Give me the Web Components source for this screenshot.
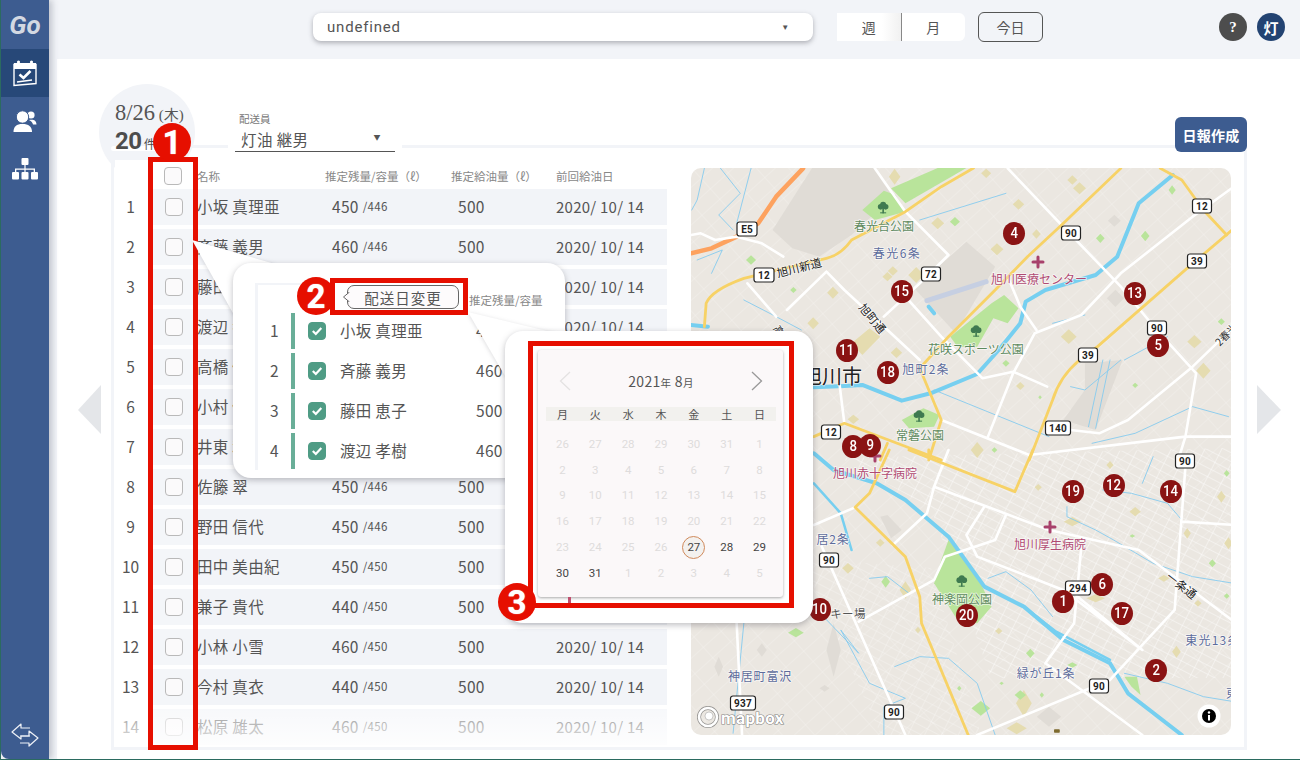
<!DOCTYPE html>
<html lang="ja"><head><meta charset="utf-8"><title>Go</title>
<style>
html,body{margin:0;padding:0;background:#2b6b60;width:1300px;height:760px;overflow:hidden}
body{font-family:"Noto Sans CJK JP","Noto Sans",sans-serif;color:#555}
</style></head><body>
<app-shell></app-shell>
<script>
const FONT='"Noto Sans CJK JP","Noto Sans",sans-serif';
function def(name,fn){customElements.define(name,class extends HTMLElement{connectedCallback(){if(this.shadowRoot)return;const r=this.attachShadow({mode:'open'});r.innerHTML=fn(this);}});}

def('side-bar',()=>`<style>
:host{display:flex;flex-direction:column;width:48px;height:100%;background:#3d5c90;border-bottom-left-radius:8px;box-shadow:3px 0 6px rgba(60,70,90,.28);position:relative;z-index:2;flex:none}
.logo{height:49px;display:flex;align-items:center;justify-content:center;font:italic 700 26px "Roboto",sans-serif;color:#d3d8e2}
.it{height:48px;display:flex;align-items:center;justify-content:center}
.on{background:#274878}
.sp{flex:1}
.bot{height:37px;display:flex;justify-content:center;align-items:flex-start}
svg{display:block}
</style>
<div class="logo">Go</div>
<div class="it on"><svg width="26" height="28" viewBox="0 0 26 28" fill="none" stroke="#fff"><path d="M2 5.500h22v19l-22 2z" stroke-width="1.400"/><rect x="2" y="4" width="22" height="6" fill="#fff" stroke="none"/><circle cx="6.500" cy="3" r="1.600" fill="#fff" stroke="none"/><circle cx="19.500" cy="3" r="1.600" fill="#fff" stroke="none"/><path d="M7.500 15.500l4 3.500 7-7" stroke-width="2.600"/><path d="M5 23l15-2" stroke-width="1.400"/></svg></div>
<div class="it"><svg width="24" height="24" viewBox="0 0 24 24" fill="#fff"><circle cx="18" cy="6" r="3.600"/><path d="M16 11c4-1 7.500 0 7.500 4.500H20c-.5-2-1.500-3-4-4.500z"/><circle cx="9.500" cy="8" r="6.200" stroke="#3d5c90" stroke-width="1"/><path d="M.5 23c0-5.500 3-8 9-8s9.500 2.500 9.500 8z"/></svg></div>
<div class="it"><svg width="26" height="22" viewBox="0 0 26 22" fill="#fff"><rect x="9.500" y="0" width="7" height="7" rx="1"/><rect x="0" y="14" width="7" height="7.500" rx="1"/><rect x="9.500" y="14" width="7" height="7.500" rx="1"/><rect x="19" y="14" width="7" height="7.500" rx="1"/><path d="M12.400 7h1.200v3.500H23V14h-1.300v-2.300h-8.100V14h-1.200v-2.300H4.300V14H3v-3.500h9.400z"/></svg></div>
<div class="sp"></div>
<div class="bot"><svg width="30" height="26" viewBox="0 0 30 26" fill="none" stroke="#eef1f7" stroke-width="1.200" stroke-linejoin="round"><path d="M20 6H11V2L2 10l9 7v-3h9"/><path d="M10 14h9V9l9 7-9 8v-3h-9"/></svg></div>`);

def('top-bar',()=>`<style>
:host{display:flex;height:59px;flex:none;background:#f2f4f8;box-sizing:border-box;padding:13px 15px 0 264px;align-items:flex-start;font-family:${FONT};color:#555}
.sel{width:500px;height:28px;background:#fff;border-radius:8px;box-shadow:0 2px 5px rgba(70,70,80,.4);display:flex;align-items:center;padding:0 23px 0 14px;box-sizing:border-box;justify-content:space-between;font:15px Roboto,sans-serif;letter-spacing:.8px}
.car{font-size:8px}
.tog{display:flex;margin-left:24px;width:128px;height:28px;background:#fff;border-radius:6px;font-size:14px}
.tog span{flex:1;display:flex;align-items:center;justify-content:center}
.tog span:first-child{border-right:1px solid #888;background:linear-gradient(90deg,#fff 70%,#f1f1f1)}
.today{margin:-1px 0 0 13px;width:65px;height:30px;box-sizing:border-box;border:1px solid #555;border-radius:6px;display:flex;align-items:center;justify-content:center;font-size:14px}
.sp{flex:1}
.c{width:28px;height:28px;border-radius:50%;color:#fff;display:flex;align-items:center;justify-content:center;font:700 15px "Liberation Serif",serif}
</style>
<div class="sel"><span>undefined</span><span class="car">▼</span></div>
<div class="tog"><span>週</span><span>月</span></div>
<div class="today">今日</div>
<div class="sp"></div>
<div class="c" style="background:#4d4d4d">?</div>
<div class="c" style="background:#234372;margin-left:10px;font-family:'Noto Sans CJK JP',serif">灯</div>`);

def('day-tab',()=>`<style>
:host{display:block;width:96px;height:96px;margin-left:-12px;border-radius:50%;background:#f2f4f8;flex:none;position:relative;z-index:1;font-family:${FONT};color:#555}
.d{position:absolute;left:16px;top:16px;font:22.500px "Liberation Serif",serif;white-space:nowrap}
.d small{font-size:15px}
.n{position:absolute;left:16px;top:43px;font:700 24px/28px "Roboto",sans-serif;white-space:nowrap;color:#4d4d4d;letter-spacing:-.5px}
.n small{font:400 12px ${FONT}}
.strip{position:absolute;left:12px;top:62px;width:50px;height:5px;background:#fff;border-radius:3px}
</style><div class="strip"></div><div class="d">8/26<small> (木)</small></div><div class="n">20<small> 件</small></div>`);

def('driver-select',()=>`<style>
:host{display:block;width:160px;margin-left:40px;height:68px;box-sizing:border-box;padding-top:28px;position:relative;z-index:1;background:#fff;box-shadow:7px 0 0 #fff,-7px 0 0 #fff;font-family:${FONT};color:#555}
.l{font-size:10.500px;line-height:14px;padding-left:4px;color:#777}
.v{height:25px;border-bottom:1px solid #555;display:flex;justify-content:space-between;align-items:center;padding:0 14px 0 6px;font-size:15.500px;letter-spacing:.4px}
.v i{font-style:normal;font-size:7px;margin-top:-4px}
</style><div class="l">配送員</div><div class="v"><span>灯油 継男</span><i>▼</i></div>`);

def('report-button',()=>`<style>
:host{display:flex;align-items:center;justify-content:center;width:72px;height:35px;border-radius:6px;background:#3d5c90;color:#fff;font:700 14px ${FONT};margin:33px 0 0 auto;flex:none;position:relative;z-index:1;letter-spacing:.2px}
</style>日報作成`);

def('check-box',h=>`<style>
:host{display:flex;width:18px;height:18px;box-sizing:border-box;border-radius:4px;background:${h.hasAttribute('checked')?'#4f9c85':'#fbf9fb'};border:1px solid ${h.hasAttribute('checked')?'#4f9c85':'#a8a8a8'};align-items:center;justify-content:center;flex:none}
</style>${h.hasAttribute('checked')?'<svg width="12" height="10" viewBox="0 0 12 10" fill="none" stroke="#fff" stroke-width="2.200"><path d="M1.800 5l3 3 5.500-6"/></svg>':''}`);

def('list-row',h=>{const a=n=>h.getAttribute(n);const cov=(a('cover')||'');return `<style>
:host{display:grid;grid-template-columns:33px 49px 135px 126px 98px 1fr;height:36px;margin-bottom:4px;align-items:center;font-family:${FONT};color:#555;font-size:15.500px;letter-spacing:.3px}
.n{text-align:center;font-size:15.500px;padding-right:2px;padding-bottom:2px;letter-spacing:0}
.b{height:36px;background:#f2f4f8;display:flex;align-items:center;white-space:nowrap;box-sizing:border-box;padding-bottom:2px}
.ck{justify-content:center;padding:0 0 0 1px;border-left:1px solid #d8d9e2}
.num{font-size:15.500px;letter-spacing:.3px}
.num small{font-size:11.500px;margin-left:4px}
.date{font-size:15px;letter-spacing:.25px}
</style><div class="n">${a('no')}</div><div class="b ck"><check-box></check-box></div><div class="b">${a('name')}</div><div class="b num">${cov.includes('v')?'':`${a('rest')}<small>/${a('cap')}</small>`}</div><div class="b num">${cov.includes('v')?'':'500'}</div><div class="b num date">${cov.includes('d')?'':'2020/ 10/ 14'}</div>`;});

def('list-table',()=>{
const rows=[['1','小坂 真理亜','450','446',''],['2','斉藤 義男','460','446',''],['3','藤田 恵子','500','446','v'],['4','渡辺 孝樹','460','446','v'],['5','高橋 優子','450','446','vd'],['6','小村 健太','450','446','vd'],['7','井東 和也','460','446','vd'],['8','佐籐 翠','450','446','d'],['9','野田 信代','450','446','d'],['10','田中 美由紀','450','450','d'],['11','兼子 貴代','440','450','d'],['12','小林 小雪','460','450',''],['13','今村 真衣','440','450',''],['14','松原 雄太','460','450','']];
return `<style>
:host{display:block;width:552px;height:585px;flex:none;background:#fff;overflow:hidden;position:relative;z-index:2;font-family:${FONT};color:#888}
.h{display:grid;grid-template-columns:33px 49px 128px 126px 105px 1fr;height:29px;font-size:11.500px;align-items:center;padding-top:2px;box-sizing:border-box;white-space:nowrap}
.fade{position:absolute;left:0;right:0;bottom:0;height:40px;background:linear-gradient(rgba(255,255,255,.35),rgba(255,255,255,.85))}
.c{display:flex;justify-content:center;padding-left:1px}
</style><div class="h"><span></span><span class="c"><check-box></check-box></span><span>名称</span><span>推定残量/容量（ℓ）</span><span>推定給油量（ℓ）</span><span>前回給油日</span></div>
${rows.map(r=>`<list-row no="${r[0]}" name="${r[1]}" rest="${r[2]}" cap="${r[3]}" cover="${r[4]}"></list-row>`).join('')}<div class="fade"></div>`;});

def('map-pin',h=>`<style>
:host{position:absolute;left:${h.getAttribute('x')-11}px;top:${h.getAttribute('y')-11.5}px;width:22px;height:23px;border-radius:50%;background:#8a1313;color:#fff;display:flex;align-items:center;justify-content:center;font:500 15px Roboto,sans-serif}
span{transform:scaleX(.88);display:block}
</style><span>${h.getAttribute('n')}</span>`);

def('route-map',()=>{
const T4='translate(-1 -8) scale(.359 .3333)',T5='translate(-1 282) scale(.359 .3333)';
const line=(c,s)=>`<path class="${c}" d="${s}"/>`;
const poly=(f,s)=>`<polygon fill="${f}" points="${s}"/>`;
const dm=(f,x,y,w=14,h=14)=>`<polygon fill="${f}" points="${x},${y-h} ${x+w},${y} ${x},${y+h} ${x-w},${y}"/>`;
const tree=(x,y)=>`<g fill="#3f7a50" transform="translate(${x} ${y}) scale(2.800 3)"><circle cx="-2.500" cy="-1.500" r="2.800"/><circle cx="2.500" cy="-1.500" r="2.800"/><circle cx="0" cy="-3.500" r="3"/><rect x="-.8" y="-2" width="1.600" height="7"/><rect x="-3" y="4" width="6" height="1"/></g>`;
const g4=[
poly('#e0dcd6','230,210 340,24 510,24 565,110 450,225 360,290 285,265'),
poly('#e0dcd6','625,385 770,245 850,320 740,520'),
poly('#b9e49b','480,150 540,92 572,105 600,155 515,180'),
poly('#b9e49b','560,85 600,130 770,24 690,24'),
poly('#b9e49b','725,530 840,430 875,405 915,445 885,490 845,475 800,560 745,560'),
poly('#e5dcb0','450,550 500,505 530,530 480,585'),
poly('#e0dcd6','1040,780 1100,690 1100,610 1205,600 1130,810'),
dm('#e5dcb0',825,40),dm('#e5dcb0',915,133,16,16),dm('#e5dcb0',965,222,12,14),dm('#e5dcb0',855,268,18,18),dm('#e5dcb0',1085,85,18,18),dm('#e5dcb0',1065,60,14,14),dm('#e5dcb0',690,190,18,18),dm('#e0dcd6',1182,182,18,18),dm('#e5dcb0',570,50,16,24),
dm('#e5dcb0',550,350,14,14),dm('#e5dcb0',565,333,14,14),dm('#e5dcb0',630,345,22,24),dm('#e5dcb0',398,398,16,18),dm('#e5dcb0',343,490,16,18),dm('#e5dcb0',575,578,16,16),dm('#e5dcb0',1405,545,20,20),dm('#e5dcb0',1430,632,20,24),dm('#e5dcb0',1055,530,22,22),dm('#e0dcd6',1185,415,24,26),dm('#e5dcb0',920,678,12,12),dm('#e5dcb0',455,778,16,14),
dm('#b9e49b',738,185,14,14),dm('#b9e49b',170,300,14,14),dm('#b9e49b',288,390,9,9),dm('#b9e49b',1143,235,12,14),dm('#b9e49b',1268,228,12,16),dm('#b9e49b',1343,90,10,14),dm('#b9e49b',1480,485,10,10),dm('#b9e49b',880,610,10,10),dm('#b9e49b',1240,676,8,8),dm('#b9e49b',975,712,5,6),dm('#b9e49b',848,870,8,8),
poly('#b9e49b','590,780 650,745 695,765 680,800 610,805'),
`<path d="M660,422 L825,365" stroke="#c6cfe2" stroke-width="5" vector-effect="non-scaling-stroke" fill="none"/>`,
line('t','M40,25 L20,120 L5,150 M85,25 L140,100 L80,165 L120,210 M170,25 L130,190 M20,300 L90,270 L60,340 M150,420 L240,470 L310,510 M640,180 L880,100 M1010,490 L1100,465 M1210,600 L1330,530 M1060,680 L1100,690 L1200,600 M1150,600 L1110,800 M1170,600 L1130,805 M680,690 L1000,830 M1500,770 L1400,740 L1240,820 L1120,850'),
line('r','M345,682 L430,678 L480,675 L590,722 L670,700 L800,642 L860,570 L920,490 L935,425 L990,390 L1130,345 L1190,290 L1250,130 L1345,45'),
line('r','M3,495 L50,500 M665,440 L680,460'),
line('o','M315,25 L240,110 L190,190 L130,230 L60,265 L3,280'),
line('w','M515,25 L600,155 L720,285 L640,370 L540,470 M885,25 L1035,195 L1200,380 L1300,510 L1410,640 L1380,830 L1360,900 M380,335 L430,390 L530,490 L640,600 M600,410 L700,530 L815,655 L900,635 L995,680 M1515,80 L1400,170 L1200,340 L1090,465 L960,520 L900,640 L830,830 M1515,500 L1400,620 L1220,780 L1140,820 L1060,810 M415,660 L430,790 M700,780 L945,885 L1380,830 L1515,830 M3,225 L30,220 L70,240 L130,230 L200,250 L260,290 M885,350 L920,440 L965,510 M380,335 L270,450 M160,370 L240,470'),
line('y','M40,500 L45,430 Q60,390 150,355 L380,295 Q420,285 450,240 L600,155 L700,80 L790,24'),
line('y','M1200,25 L1035,195 L940,290 L850,390 L720,530 L640,625 L700,780 L665,900'),
line('y','M1515,205 L1390,320 L1135,560 L1085,600 Q1030,650 1010,720 L945,900'),
line('y','M1310,25 L1370,60 L1430,150 L1495,225'),
line('y','M345,830 L430,790 L700,900 M550,850 L530,900'),
tree(538,145),tree(797,515),tree(638,770)
].join('');
const g5=[
poly('#b9e49b','720,270 770,330 810,400 840,470 800,520 745,510 680,400 700,330'),
poly('#b9e49b','1210,680 1245,680 1255,735 1230,710'),
poly('#e0dcd6','530,200 550,195 590,240 560,265'),
dm('#e5dcb0',440,355,16,16),dm('#e5dcb0',970,112,10,10),dm('#e5dcb0',1170,45,10,12),dm('#e5dcb0',1065,215,24,14),dm('#e5dcb0',1240,185,16,14),dm('#e5dcb0',1385,250,10,16),dm('#e5dcb0',1500,280,12,18),dm('#e5dcb0',1480,140,12,18),dm('#e5dcb0',1320,385,16,10),dm('#e5dcb0',1130,445,26,12),dm('#e5dcb0',1355,605,12,18),dm('#e5dcb0',1415,460,10,10),dm('#e5dcb0',860,543,10,10),dm('#e5dcb0',635,540,8,10),dm('#e5dcb0',600,420,16,26),dm('#e5dcb0',530,278,12,12),dm('#e5dcb0',930,760,22,40),dm('#e5dcb0',910,835,28,18),dm('#e5dcb0',800,0,18,24),
dm('#b9e49b',1495,70,8,10),dm('#b9e49b',1455,340,10,12),dm('#b9e49b',1495,438,8,8),dm('#b9e49b',1232,258,8,5),dm('#b9e49b',948,610,12,14),dm('#b9e49b',920,735,16,14),dm('#b9e49b',980,735,6,8),dm('#b9e49b',868,700,6,5),dm('#b9e49b',295,548,22,14),dm('#b9e49b',545,395,12,18),dm('#b9e49b',810,775,26,22),dm('#b9e49b',750,715,6,8),dm('#b9e49b',1065,645,14,8),
dm('#e0dcd6',1000,800,34,30),dm('#e0dcd6',375,715,14,10),dm('#e0dcd6',400,600,20,80),dm('#e0dcd6',80,650,12,30),dm('#e0dcd6',200,600,14,20),
line('t','M345,470 L470,610 L420,540 L500,700 L600,745 L540,770 L540,855 M570,650 L640,620 L720,625 L800,700 L850,855 M1050,170 L1050,200 L1130,240 L1180,270 L1290,340 L1400,380 L1515,400 M1150,120 L1230,130 L1330,160 L1370,210 M1210,670 L1330,700 L1430,740 L1515,755 M830,385 L880,365 L950,420 L1010,500 M1290,20 L1260,100 M150,520 L120,850 M500,385 L550,380 L610,430'),
line('r','M345,10 L400,60 L520,100 L600,150 L720,260 L820,410 L930,470 L1040,570 L1170,640 L1220,730 L1370,855'),
line('r2','M345,100 L420,190 L450,300'),line('r2','M930,470 L1020,545 L1170,630'),
line('w','M345,225 L460,172 M680,110 L1000,240 L1250,300 L1515,515 M720,0 L680,110 L660,190 L565,285 M820,170 L770,255 L800,320 L1040,420 L1260,600 M880,195 L850,270 L710,320 L680,390 L470,515 M1380,50 L1350,480 L1170,690 L800,855 M1090,290 L1070,520 L990,640 L1260,855 M355,260 L600,855 M130,520 L145,855 M1370,215 L1515,225 M1080,440 L1260,600'),
line('y','M610,0 L905,125 L955,0 M555,0 L500,130 L460,172 L600,320 L640,440 L645,520 L775,855 M665,0 L665,20'),
`<g fill="#7d6a2e"><path d="M1010,835 L1022,827 L1036,835 L1022,842z"/><rect x="1014" y="838" width="16" height="10" rx="2"/></g>`,
tree(757,395)
].join('');
const shields=[['E5',747,229,20],['12',764,275,20],['72',931,274,19],['12',1202,206,19],['90',1071,233,19],['39',1197,261,19],['90',1157,328,19],['39',1088,355,19],['140',1058,428,25],['12',831,432,19],['90',1185,461,19],['90',829,560,19],['294',1078,588,25],['90',1099,686,19],['937',743,703,25],['90',894,712,19]];
const sh=shields.map(s=>`<g transform="translate(${s[1]-691} ${s[2]-168})"><rect x="${-s[3]/2}" y="-7" width="${s[3]}" height="14" rx="2.500" fill="#fff" stroke="#222" stroke-width="1.200"/><text class="sh" y="3.500" text-anchor="middle">${s[0]}</text></g>`).join('');
const lab=(t,x,y,c,fs,rot,ls)=>`<text x="${x-691}" y="${y-168}" fill="${c}" font-size="${fs}" text-anchor="middle" dominant-baseline="central" ${ls?`letter-spacing="${ls}"`:''} ${rot?`transform="rotate(${rot} ${x-691} ${y-168})"`:''} class="l">${t}</text>`;
const G='#5e8a5e',B='#5d6c9c',R='#b04a72',K='#222';
const labels=[
['春光台公園',884,225,G,12],['春光6条',897,252,B,12,0,1.500],['旭川新道',799,267,K,11.500,-14],['旭町通',873,318,K,11.500,50],['旭川医療センター',1039,278,R,12],['花咲スポーツ公園',976,348,G,12],['旭町2条',926,368,B,12,0,1.200],['常磐公園',920,434,G,12],['旭川市',832,375,K,20],['2春光',1226,334,'#333',10.500,-45],['高砂',782,335,K,10.500,60],
['旭川赤十字病院',875,472,R,12],['旭川厚生病院',1050,543,R,12],['神楽岡公園',962,598,G,12],['居2条',833,538,B,12,0,.8],['キー場',848,613,'#555',11.500,0,.4],['神居町富沢',760,675,B,12,0,.8],['緑が丘1条',1046,672,B,12,0,.8],['東光13条',1213,639,B,12,0,1.200],['東',1232,692,B,12],['一条通',1182,585,K,11.500,38]
].map(a=>lab(...a)).join('');
const cross=(x,y)=>`<path d="M${x-691-5} ${y-168}h10M${x-691} ${y-168-5}v10" stroke="#a8416b" stroke-width="3"/>`;
const pins=[[1,1063,601],[2,1156,670],[4,1014,233],[5,1158,345],[6,1102,584],[8,853,446],[9,870,445],[10,820,609],[11,847,350],[12,1114,485],[13,1135,293],[14,1171,491],[15,902,291],[17,1122,613],[18,888,372],[19,1073,491],[20,967,615]];
return `<style>
:host{display:block;position:relative;width:540px;height:567px;margin-top:8px;border-radius:10px;overflow:hidden;background:#ebe7e1;flex:none}
svg{position:absolute;inset:0;display:block}
path{fill:none;vector-effect:non-scaling-stroke;stroke-linejoin:round;stroke-linecap:round}
polygon{vector-effect:non-scaling-stroke}
.t{stroke:#86cbee;stroke-width:.9}.r{stroke:#76cff0;stroke-width:4}.r2{stroke:#76cff0;stroke-width:2.500}
.o{stroke:#fda25f;stroke-width:4.500}.w{stroke:#fff;stroke-width:2.600}.y{stroke:#f7d266;stroke-width:2.800}
.l{font-family:${FONT};paint-order:stroke;stroke:rgba(255,255,255,.7);stroke-width:1.500}
.sh{font:700 10px "Roboto",sans-serif;fill:#222;letter-spacing:.2px}
.mb{font:700 17px "Roboto",sans-serif;fill:#fff;stroke:rgba(80,80,80,.7);stroke-width:1.200px;paint-order:stroke;letter-spacing:.3px}
</style>
<svg width="540" height="567" viewBox="0 0 540 567">
<defs><pattern id="gd" width="15" height="8" patternUnits="userSpaceOnUse" patternTransform="rotate(27)"><path d="M0 0H15M0 0V8" style="stroke:#fff;stroke-width:.9;vector-effect:none"/></pattern>
<pattern id="gd2" width="24" height="14" patternUnits="userSpaceOnUse" patternTransform="rotate(-42)"><path d="M0 0H24M0 0V14" style="stroke:#fff;stroke-width:.6;vector-effect:none"/></pattern></defs>
<rect width="540" height="567" fill="url(#gd2)" opacity=".6"/>
<polygon points="150,290 540,280 540,510 300,510 240,340" fill="url(#gd)" opacity=".9"/>
<polygon points="110,390 240,400 290,567 190,567" fill="url(#gd)" opacity=".55"/>
<g transform="${T4}">${g4}</g><g transform="${T5}">${g5}</g>
${cross(1038,262)}${cross(875,456)}${cross(1050,527)}
${labels}${sh}
<g transform="translate(7 539)"><circle cx="10" cy="10" r="9" fill="none" stroke="rgba(90,90,90,.6)" stroke-width="4"/><circle cx="10" cy="10" r="9" fill="none" stroke="#fff" stroke-width="2.600"/><circle cx="11" cy="9" r="4" fill="#fff" stroke="rgba(90,90,90,.5)" stroke-width=".6"/><text class="mb" x="23" y="17">mapbox</text></g>
<circle cx="518" cy="548" r="11.500" fill="#fff"/><circle cx="518" cy="548" r="7" fill="#000"/><rect x="517" y="547" width="2" height="5.500" fill="#fff"/><circle cx="518" cy="544.500" r="1.200" fill="#fff"/>
</svg>${pins.map(p=>`<map-pin n="${p[0]}" x="${p[1]-691}" y="${p[2]-168}"></map-pin>`).join('')}`;});

def('day-panel',()=>`<style>
:host{display:flex;box-sizing:border-box;width:1136px;height:605px;border:3px solid #f2f4f8;margin-top:-1px;padding:12px 12px 0 1px;gap:24px;font-family:${FONT}}
</style><list-table></list-table><route-map></route-map>`);

def('nav-arrow',h=>`<style>
:host{position:absolute;top:385px;${h.getAttribute('side')==='l'?'left:78px':'left:1257px'};width:24px;height:50px;display:block}
svg{display:block}
</style><svg width="24" height="50"><polygon fill="#e4e6e9" points="${h.getAttribute('side')==='l'?'23,0 23,49 0,25':'0,0 0,49 24,25'}"/></svg>`);

def('main-area',()=>`<style>
:host{display:block;flex:1;background:#fff;margin-left:8px;padding:25px 0 0 54px;position:relative;height:700px;box-sizing:border-box}
.head{display:flex;height:62px;width:1136px;position:relative}
</style><div class="head"><day-tab></day-tab><driver-select></driver-select><report-button></report-button></div><day-panel></day-panel>`);

def('red-frame',h=>{const a=n=>+h.getAttribute(n);return `<style>
:host{position:absolute;left:${a('x')}px;top:${a('y')}px;width:${a('w')}px;height:${a('h')}px;box-sizing:border-box;border:5px solid #e60f00;display:block;${h.hasAttribute('tint')?'background:rgba(255,255,255,.2)':''}}
</style><slot></slot>`;});

def('step-badge',h=>{const a=n=>+h.getAttribute(n);return `<style>
:host{position:absolute;left:${a('x')-19}px;top:${a('y')-19}px;width:38px;height:38px;border-radius:50%;background:#e60f00;color:#fff;display:flex;align-items:center;justify-content:center;font:700 33px "Roboto",sans-serif;text-shadow:0 0 1px #f5f5f5}
</style><slot></slot>`;});

def('select-popup',()=>{
const r=[['1','小坂 真理亜','450'],['2','斉藤 義男','460'],['3','藤田 恵子','500'],['4','渡辺 孝樹','460']];
return `<style>
:host{position:absolute;left:233px;top:263px;width:332px;height:215px;display:block;background:#fff;border-radius:18px;box-shadow:0 2px 6px rgba(70,70,80,.35);font-family:${FONT};color:#555}
.frame{position:absolute;left:22px;top:20px;width:3px;height:187px;background:#f2f4f8}
.frame2{position:absolute;left:22px;top:20px;width:90px;height:2px;background:#f2f4f8}
.hd{position:absolute;left:236px;top:29px;font-size:11.500px;color:#888;white-space:nowrap}
.rows{padding:50px 0 0 25px}
.row{display:grid;grid-template-columns:33px 17px 32px 136px 1fr;height:36px;margin-bottom:4px;align-items:center;font-size:15.500px;letter-spacing:.3px;white-space:nowrap}
.row>span{position:relative;top:-1px}
.no{text-align:center;font-size:15.500px}
.row>.bar{top:0;width:4px;height:36px;background:#69ae98}
.val{font-size:15.500px}
</style><div class="frame"></div><div class="frame2"></div><div class="hd">推定残量/容量</div>
<div class="rows">${r.map(x=>`<div class="row"><span class="no">${x[0]}</span><span class="bar"></span><check-box checked></check-box><span>${x[1]}</span><span class="val">${x[2]}</span></div>`).join('')}</div>`;});

def('date-button',()=>`<style>
:host{position:absolute;left:347px;top:285px;width:112px;height:24px;box-sizing:border-box;border:1px solid #666;border-radius:7px;background:#fdfbfc;display:flex;align-items:center;justify-content:center;font:14.500px ${FONT};color:#555;letter-spacing:1px}
svg{position:absolute;left:-5px;top:6px}
</style><svg width="7" height="10"><path d="M6.500 0L.5 5l6 5" fill="#fdfbfc" stroke="#666"/></svg><slot></slot>`);

def('cal-popup',()=>`<style>
:host{position:absolute;left:505px;top:331px;width:308px;height:292px;display:block;background:#fff;border-radius:18px;box-shadow:0 2px 6px rgba(70,70,80,.35)}
</style><slot></slot>`);

def('mini-calendar',()=>{
const days=[];for(const d of [26,27,28,29,30,31])days.push([d,0]);for(let d=1;d<=26;d++)days.push([d,0]);days.push([27,2],[28,1],[29,1],[30,1],[31,1]);for(let d=1;d<=5;d++)days.push([d,0]);
return `<style>
:host{position:absolute;left:33px;top:19px;width:245px;height:247px;box-sizing:border-box;padding:0 7px 0 8px;display:block;background:#fbf8f9;border-radius:3px;box-shadow:0 1px 3px rgba(60,60,60,.45);font-family:${FONT};color:#555}
.m{height:57px;display:flex;align-items:center;justify-content:space-between;padding:4px 13px 0 13px;box-sizing:border-box}
.t{font:14px ${FONT};letter-spacing:.3px}.t small{font-size:10.500px}
.w,.g{display:grid;grid-template-columns:repeat(7,1fr);text-align:center}
.w{height:14px;background:#f2f1ee;font-size:11px;line-height:14px;margin-bottom:10px}
.g{grid-auto-rows:25.800px;font-size:11.500px;align-items:center;justify-items:center;font-family:Roboto,sans-serif}
.g span{color:#dedcdc}.g .a{color:#444}.g .c{color:#444;background:#f3f1ef;border:1px solid #d08a5c;border-radius:50%;width:23px;height:23px;box-sizing:border-box;display:flex;align-items:center;justify-content:center}
svg{display:block}
</style><div class="m"><svg width="12" height="20" fill="none" stroke="#e4e2e2" stroke-width="1.300"><path d="M11 1L1.500 10 11 19"/></svg><div class="t">2021<small>年</small> 8<small>月</small></div><svg width="12" height="20" fill="none" stroke="#999" stroke-width="1.300"><path d="M1 1l9.500 9L1 19"/></svg></div>
<div class="w">${['月','火','水','木','金','土','日'].map(x=>`<div>${x}</div>`).join('')}</div>
<div class="g">${days.map(d=>`<span class="${d[1]==2?'c':d[1]==1?'a':''}">${d[0]}</span>`).join('')}</div>`;});

def('tail-shape',h=>`<style>
:host{position:absolute;left:0;top:0;width:1300px;height:760px;display:block;pointer-events:none}
svg{display:block;filter:drop-shadow(0 1px 2px rgba(70,70,80,.2))}
</style><svg width="1300" height="760"><polygon fill="#fff" points="${h.getAttribute('points')}"/></svg>`);

def('tick-mark',()=>`<style>:host{position:absolute;left:568px;top:597px;width:3px;height:6px;background:#c0506f;display:block}</style>`);

def('app-shell',()=>`<style>
:host{display:flex;position:relative;width:1299px;height:759px;margin-left:1px;overflow:hidden;background:#f2f4f8;font-family:${FONT}}
.col{flex:1;display:flex;flex-direction:column;min-width:0}
.ov{position:absolute;left:-1px;top:0;width:1300px;height:760px;z-index:5}
</style>
<side-bar></side-bar>
<div class="col"><top-bar></top-bar><main-area></main-area></div>
<nav-arrow side="l" style="margin-left:-1px"></nav-arrow><nav-arrow side="r" style="margin-left:-1px"></nav-arrow>
<div class="ov">
<red-frame x="148" y="157" w="50" h="593" tint></red-frame>
<step-badge x="172" y="142">1</step-badge>
<tail-shape points="192,240 275,264 234,315"></tail-shape>
<select-popup></select-popup>
<tail-shape points="468,312 560,334 505,376"></tail-shape>
<red-frame x="330" y="278" w="138" h="37" style="background:#fff"></red-frame>
<step-badge x="316" y="296">2</step-badge>
<date-button>配送日変更</date-button>
<cal-popup><mini-calendar></mini-calendar></cal-popup>
<tick-mark></tick-mark>
<red-frame x="528" y="341" w="266" h="267"></red-frame>
<step-badge x="517" y="602">3</step-badge>
</div>`);
</script>
</body></html>
